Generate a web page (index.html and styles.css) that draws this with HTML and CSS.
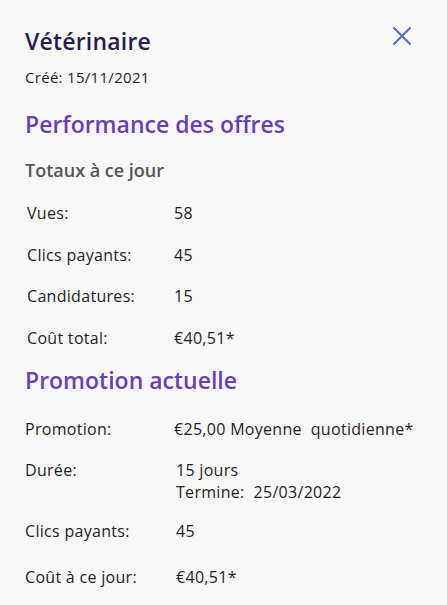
FILE: index.html
```html
<!DOCTYPE html>
<html lang="fr">
<head>
<meta charset="utf-8">
<title>Vétérinaire</title>
<link rel="stylesheet" href="styles.css">
</head>
<body>
<div class="panel">
  <header class="head">
    <h1 class="title">Vétérinaire</h1>
    <button class="close" aria-label="Fermer">
      <svg width="20" height="20" viewBox="0 0 20 20"><path d="M1.5 1.5 L18.5 18.5 M18.5 1.5 L1.5 18.5" stroke="#5468c6" stroke-width="2" fill="none"/></svg>
    </button>
  </header>
  <p class="created">Créé: 15/11/2021</p>

  <h2 class="section">Performance des offres</h2>
  <h3 class="sub">Totaux à ce jour</h3>
  <div class="rows rows-a">
    <div class="row"><span class="lbl">Vues:</span><span class="val">58</span></div>
    <div class="row"><span class="lbl">Clics payants:</span><span class="val">45</span></div>
    <div class="row"><span class="lbl">Candidatures:</span><span class="val">15</span></div>
    <div class="row"><span class="lbl">Coût total:</span><span class="val">€40,51*</span></div>
  </div>

  <h2 class="section section2">Promotion actuelle</h2>
  <div class="rows rows-b">
    <div class="row"><span class="lbl">Promotion:</span><span class="val">€25,00 Moyenne&nbsp; quotidienne*</span></div>
    <div class="row r2"><span class="lbl">Durée:</span><span class="val v2">15 jours<br>Termine:&nbsp; 25/03/2022</span></div>
    <div class="row r3"><span class="lbl">Clics payants:</span><span class="val v2">45</span></div>
    <div class="row r4"><span class="lbl">Coût à ce jour:</span><span class="val v2">€40,51*</span></div>
  </div>
</div>
</body>
</html>
```

FILE: styles.css
```css
html, body {
  margin: 0;
  padding: 0;
  background: #f8f8f9;
}
body {
  font-family: "Open Sans", "Liberation Sans", sans-serif;
  color: #1e1e22;
}
.panel {
  padding: 26px 25px 0 25px;
}
.head {
  display: flex;
  justify-content: space-between;
  align-items: flex-start;
}
.title {
  margin: 0;
  font-size: 23px;
  font-weight: 600;
  letter-spacing: 0.2px;
  color: #2a1c4e;
  line-height: 30px;
}
.close {
  background: none;
  border: 0;
  padding: 0;
  margin: 0 10px 0 0;
  width: 20px;
  height: 20px;
  cursor: pointer;
}
.close svg { display: block; }
.created {
  margin: 11px 0 0 0;
  font-size: 15px;
  letter-spacing: 0.3px;
  line-height: 20px;
}
.section {
  margin: 22px 0 0 0;
  font-size: 23px;
  font-weight: 600;
  color: #6a3fb0;
  line-height: 30px;
}
.sub {
  margin: 19px 0 0 0;
  font-size: 18px;
  font-weight: 600;
  color: #555459;
  line-height: 24px;
}
.rows {
  display: flex;
  flex-direction: column;
}
.rows-a {
  margin-top: 20px;
  padding-left: 2px;
  gap: 19.5px;
}
.row {
  display: grid;
  grid-template-columns: 147px 1fr;
  font-size: 16px;
  letter-spacing: 0.3px;
  line-height: 22px;
}
.section2 {
  margin-top: 16.5px;
}
.rows-b {
  margin-top: 23px;
}
.rows-b .row {
  grid-template-columns: 149px 1fr;
}
.v2 { padding-left: 2px; }
.r2 { margin-top: 19px; }
.r3 { margin-top: 17px; }
.r4 { margin-top: 24px; }
```
